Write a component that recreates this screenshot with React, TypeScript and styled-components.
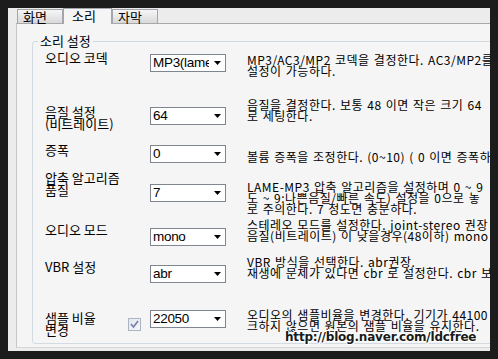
import React from "react";
import styled, { createGlobalStyle } from "styled-components";

const GlobalStyle = createGlobalStyle`
  html, body {
    margin: 0;
    padding: 0;
    background: #1c1c1c;
  }
`;

const KO = `"Noto Sans CJK KR", "Noto Sans", sans-serif`;

interface Setting {
  label: string[];
  value: string;
  desc: string[];
  height: number;
  labelDy: number;
  comboDy: number;
  descDy: number;
  checked?: boolean;
}

const settings: Setting[] = [
  {
    label: ["오디오 코덱"],
    value: "MP3(lame",
    desc: ["MP3/AC3/MP2 코덱을 결정한다. AC3/MP2를 선택", "설정이 가능하다."],
    height: 47,
    labelDy: 0,
    comboDy: 2,
    descDy: 2,
  },
  {
    label: ["음질 설정", "(비트레이트)"],
    value: "64",
    desc: ["음질을 결정한다. 보통 48 이면 작은 크기  64", "로 세팅한다."],
    height: 45,
    labelDy: 7,
    comboDy: 8,
    descDy: 0,
  },
  {
    label: ["증폭"],
    value: "0",
    desc: ["볼륨 증폭을 조정한다. (0~10) ( 0 이면 증폭하지"],
    height: 28,
    labelDy: 0,
    comboDy: 1,
    descDy: 7,
  },
  {
    label: ["압축 알고리즘", "품질"],
    value: "7",
    desc: [
      "LAME-MP3 압축 알고리즘을 설정하며  0 ~ 9",
      "도 ~ 9:나쁜음질/빠른 속도)  설정을 0으로 놓",
      "로 주의한다.  7 정도면 충분하다.",
    ],
    height: 47,
    labelDy: 0,
    comboDy: 12,
    descDy: 9,
  },
  {
    label: ["오디오 모드"],
    value: "mono",
    desc: ["스테레오 모드를 설정한다. joint-stereo 권장", "음질(비트레이트) 이 낮을경우(48이하) mono"],
    height: 37,
    labelDy: 5,
    comboDy: 9,
    descDy: 0,
  },
  {
    label: ["VBR 설정"],
    value: "abr",
    desc: ["VBR 방식을 선택한다. abr권장.", "재생에 문제가 있다면 cbr 로 설정한다. cbr 보"],
    height: 53,
    labelDy: 5,
    comboDy: 9,
    descDy: 0,
  },
  {
    label: ["샘플 비율", "변경"],
    value: "22050",
    desc: ["오디오의 샘플비율을 변경한다. 기기가 44100", "크하지 않으면 원본의 샘플 비율을 유지한다."],
    height: 34,
    labelDy: 3,
    comboDy: 1,
    descDy: 0,
    checked: true,
  },
];

const Screen = styled.div`
  width: 498px;
  height: 359px;
  box-sizing: border-box;
  padding: 8px;
  background: #1c1c1c;
  overflow: hidden;
`;

const Window = styled.div`
  position: relative;
  height: 100%;
  display: flex;
  flex-direction: column;
  background: #ececec;
  overflow: hidden;
  font-family: ${KO};
  color: #000;
`;

const TabStrip = styled.div`
  position: relative;
  z-index: 1;
  height: 15px;
  display: flex;
  align-items: flex-end;
  padding-left: 9px;
`;

const Tab = styled.div<{ $active?: boolean }>`
  box-sizing: border-box;
  width: ${(p) => (p.$active ? 49 : 46)}px;
  height: ${(p) => (p.$active ? 16 : 14)}px;
  margin-bottom: ${(p) => (p.$active ? -1 : 0)}px;
  padding-left: ${(p) => (p.$active ? 8 : 5)}px;
  border: 1px solid #a3a7ad;
  border-bottom: none;
  background: ${(p) => (p.$active ? "#f5f5f5" : "linear-gradient(#f6f6f6, #d9d9d9)")};
  font-size: 13px;
  line-height: 13px;
  white-space: nowrap;
`;

const TabBody = styled.div`
  flex: 1;
  margin: 0 0 3px 8px;
  background: #f5f5f5;
  border-top: 1px solid #a8a8a8;
  border-left: 1px solid #c6c6c6;
  border-bottom: 1px solid #d6d6d6;
  overflow: hidden;
`;

const GroupBox = styled.div`
  position: relative;
  box-sizing: border-box;
  width: 500px;
  height: 303px;
  margin: 17px 0 0 15px;
  padding: 10px 0 0 12px;
  border: 1px solid #d3dbe2;
  border-radius: 3px;
`;

const Legend = styled.span`
  position: absolute;
  top: -8px;
  left: 5px;
  padding: 0 2px;
  background: #f5f5f5;
  font-size: 13px;
  line-height: 14px;
`;

const Row = styled.div<{ $h: number }>`
  display: flex;
  align-items: flex-start;
  height: ${(p) => p.$h}px;
`;

const Label = styled.div<{ $dy: number }>`
  width: 83px;
  margin-top: ${(p) => p.$dy}px;
  font-size: 13px;
  line-height: 12px;
  white-space: nowrap;
`;

const CheckCell = styled.div`
  width: 22px;
  padding-top: 9px;
`;

const CheckBox = styled.div`
  box-sizing: border-box;
  width: 13px;
  height: 13px;
  border: 1px solid #a9b4c6;
  background: linear-gradient(135deg, #e4e7ee, #f7f7f7);
  display: flex;
  align-items: center;
  justify-content: center;
`;

const Combo = styled.div<{ $dy: number }>`
  box-sizing: border-box;
  width: 76px;
  height: 18px;
  margin-top: ${(p) => p.$dy}px;
  border: 1px solid #7f8690;
  background: #fff;
  display: flex;
  align-items: center;
`;

const ComboText = styled.span`
  flex: 1;
  overflow: hidden;
  white-space: nowrap;
  padding-left: 2px;
  font-family: "Liberation Sans", Arial, sans-serif;
  font-size: 13.5px;
  letter-spacing: -0.3px;
  line-height: 16px;
`;

const ComboArrow = styled.div`
  width: 16px;
  height: 16px;
  display: flex;
  align-items: center;
  justify-content: center;
`;

const Desc = styled.div<{ $dy: number }>`
  margin: ${(p) => p.$dy}px 0 0 21px;
  font-size: 12px;
  line-height: 11px;
  letter-spacing: 0.5px;
  word-spacing: 1px;
  white-space: nowrap;
`;

const Watermark = styled.div`
  position: absolute;
  left: 277px;
  top: 322px;
  font-family: "DejaVu Sans", Verdana, sans-serif;
  font-weight: bold;
  font-size: 12px;
  letter-spacing: -0.2px;
  color: #1a1a1a;
  text-shadow: 1px 0 #fff, -1px 0 #fff, 0 1px #fff, 0 -1px #fff, 1px 1px #fff, -1px -1px #fff;
`;

const Arrow: React.FC = () => (
  <svg width="7" height="4" viewBox="0 0 7 4">
    <path d="M0 0 H7 L3.5 4 Z" fill="#000" />
  </svg>
);

const Check: React.FC = () => (
  <svg width="9" height="9" viewBox="0 0 9 9">
    <path d="M1 4 L3.5 7 L8 1" stroke="#6f7fb0" strokeWidth="1.6" fill="none" />
  </svg>
);

export default function App() {
  return (
    <>
      <GlobalStyle />
      <Screen>
        <Window>
          <TabStrip>
            <Tab>화면</Tab>
            <Tab $active>소리</Tab>
            <Tab>자막</Tab>
          </TabStrip>
          <TabBody>
            <GroupBox>
              <Legend>소리 설정</Legend>
              {settings.map((el, i) => (
                <Row key={i} $h={el.height}>
                  <Label $dy={el.labelDy}>
                    {el.label.map((line, j) => (
                      <div key={j}>{line}</div>
                    ))}
                  </Label>
                  <CheckCell>
                    {el.checked && (
                      <CheckBox>
                        <Check />
                      </CheckBox>
                    )}
                  </CheckCell>
                  <Combo $dy={el.comboDy}>
                    <ComboText>{el.value}</ComboText>
                    <ComboArrow>
                      <Arrow />
                    </ComboArrow>
                  </Combo>
                  <Desc $dy={el.descDy}>
                    {el.desc.map((line, j) => (
                      <div key={j}>{line}</div>
                    ))}
                  </Desc>
                </Row>
              ))}
            </GroupBox>
          </TabBody>
          <Watermark>http://blog.naver.com/ldcfree</Watermark>
        </Window>
      </Screen>
    </>
  );
}
